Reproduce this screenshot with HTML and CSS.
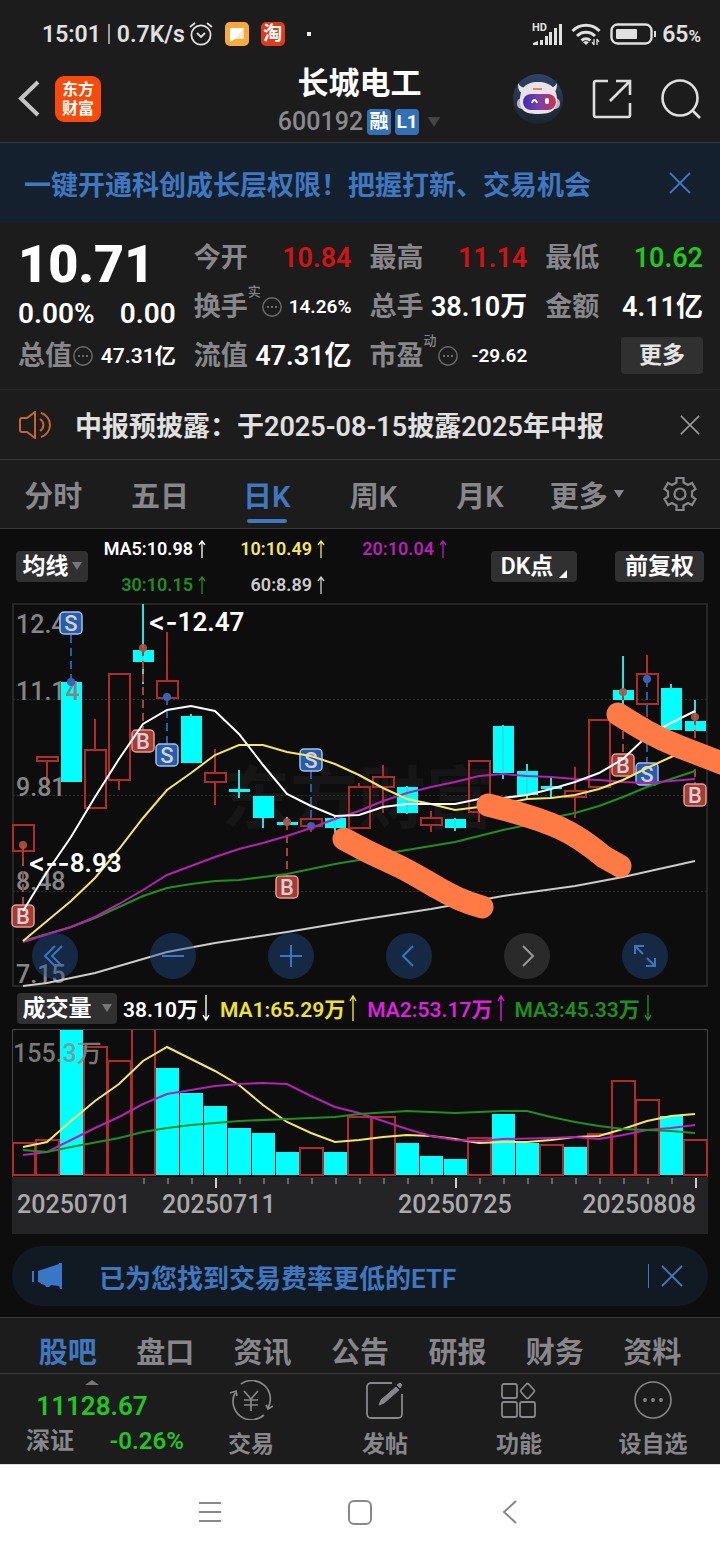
FILE: index.html
```
<!DOCTYPE html>
<html lang="zh-CN">
<head>
<meta charset="utf-8">
<meta name="viewport" content="width=device-width, initial-scale=1">
<title>长城电工 600192</title>
<link rel="stylesheet" href="styles.css">
</head>
<body>
<svg class="defs" aria-hidden="true">
  <symbol id="up" viewBox="0 0 8 18"><path d="M4 1v17M1 5l3-4 3 4" fill="none" stroke="currentColor" stroke-width="1.3"/></symbol>
  <symbol id="down" viewBox="0 0 8 26"><path d="M4 0v25M1 20l3 5 3-5" fill="none" stroke="currentColor" stroke-width="1.4"/></symbol>
  <symbol id="up-tall" viewBox="0 0 8 26"><path d="M4 26V1M1 6l3-5 3 5" fill="none" stroke="currentColor" stroke-width="1.4"/></symbol>
  <symbol id="more" viewBox="0 0 20 20"><circle cx="10" cy="10" r="9.2" fill="none" stroke="currentColor" stroke-width="1.4"/><path d="M5 9h2v2H5zM9 9h2v2H9zM13 9h2v2h-2z" fill="currentColor"/></symbol>
  <symbol id="close" viewBox="0 0 22 22"><path d="M1 1l20 20M21 1L1 21" fill="none" stroke="currentColor" stroke-width="1.8"/></symbol>
  <symbol id="tri" viewBox="0 0 10 8"><path d="M0 0h10L5 8z" fill="currentColor"/></symbol>
</svg>

<div class="status">
  <div class="status-side">
    <span>15:01</span><span class="status-rule"></span><span>0.7K/s</span>
    <svg class="alarm" viewBox="0 0 24 24" fill="none" stroke="currentColor" stroke-width="1.8"><circle cx="12" cy="13" r="9.6"/><path d="M8 11l4 4 4-4M1 5l5-4M23 5l-5-4"/></svg>
    <svg class="app-icon" viewBox="0 0 24 24"><rect width="24" height="24" rx="5" fill="#fba93c"/><path d="M5 6h14v11H10l-5 3z" fill="#fff"/><path d="M19 6v11h-9z" fill="#ffe9c9"/></svg>
    <span class="app-icon taobao">淘</span>
    <span class="status-dot"></span>
  </div>
  <div class="status-side">
    <svg class="signal" viewBox="0 0 30 24"><g fill="currentColor"><path d="M1 23v-2l5-2v4zM8 18h3v5H8zM13 14h3v9h-3zM17 10h3v13h-3zM22 6h3v17h-3zM27 2h3v21h-3z"/></g><text x="0" y="9" class="hd">HD</text></svg>
    <svg class="wifi" viewBox="0 0 30 24" fill="none" stroke="currentColor" stroke-width="3"><path d="M1.500 9a19 19 0 0 1 27 0M6 14a12.500 12.500 0 0 1 18 0M10.500 18.500a6.500 6.500 0 0 1 9 0"/><path d="M12 20l3-1 3 1-3 3z" fill="currentColor" stroke="none"/><path d="M23 17v6M26 17v6M21 20l2 3M28 20l-2-3" stroke-width="1.300"/></svg>
    <svg class="battery" viewBox="0 0 47 22"><rect x="1.500" y="1.500" width="40" height="19" rx="6" fill="none" stroke="currentColor" stroke-width="2.400"/><rect x="6" y="6" width="21" height="10" rx="1" fill="currentColor"/><path d="M44 8h2v6h-2z" fill="currentColor"/></svg>
    <span>65<small>%</small></span>
  </div>
</div>

<header class="header">
  <div class="header-left">
    <button class="plain" aria-label="返回"><svg class="back" viewBox="0 0 22 37"><path d="M20 2L3 18.500 20 35" fill="none" stroke="#c4c4c4" stroke-width="4"/></svg></button>
    <span class="logo">东方<br>财富</span>
  </div>
  <div class="header-mid">
    <h1>长城电工</h1>
    <div class="code"><span>600192</span><b class="badge">融</b><b class="badge">L1</b><svg class="code-tri"><use href="#tri"/></svg></div>
  </div>
  <div class="header-right">
    <button class="plain" aria-label="智能助手"><svg class="robot" viewBox="0 0 50 50"><defs><linearGradient id="sky" x2="0" y2="1"><stop stop-color="#2d4468"/><stop offset="1" stop-color="#1b2430"/></linearGradient><linearGradient id="visor"><stop stop-color="#3c2fb0"/><stop offset=".5" stop-color="#7c3fae"/><stop offset="1" stop-color="#d03248"/></linearGradient></defs><circle cx="25" cy="25" r="25" fill="url(#sky)"/><path d="M5 9c0 6 1 10 6 10l6-6c-6 2-10 0-12-4zM44 9c0 6-1 10-6 10l-6-6c6 2 10 0 12-4z" fill="#e9e4e6"/><rect x="4" y="24" width="43" height="11" rx="5" fill="#b9b5c0"/><path d="M25 8c14 0 19 8 19 18s-5 14-19 14S7 36 7 26 11 8 25 8z" fill="#e8e3e4"/><path d="M20 15h9" stroke="#d98a62" stroke-width="2"/><rect x="10" y="20" width="33" height="16" rx="8" fill="url(#visor)"/><path d="M19 29c1-4 4-4 5 0" fill="none" stroke="#fff" stroke-width="1.800"/><rect x="32" y="24" width="4" height="6" rx="2" fill="#fff"/></svg></button>
    <button class="plain" aria-label="分享"><svg class="share" viewBox="0 0 40 40" fill="none" stroke="#dedede" stroke-width="2.600"><path d="M16 2H4a2 2 0 0 0-2 2v32a2 2 0 0 0 2 2h32a2 2 0 0 0 2-2V24M24 2h14v14M38 2L18 22"/></svg></button>
    <button class="plain" aria-label="搜索"><svg class="search" viewBox="0 0 40 40" fill="none" stroke="#dedede" stroke-width="2.600"><circle cx="19" cy="19" r="17.500"/><path d="M31 31l8 8"/></svg></button>
  </div>
</header>

<section class="promo">
  <a href="#open">一键开通科创成长层权限！把握打新、交易机会</a>
  <button class="plain" aria-label="关闭"><svg class="x22"><use href="#close"/></svg></button>
</section>

<section class="quote">
  <div class="quote-main">
    <strong class="price">10.71</strong>
    <div class="change"><span>0.00%</span><span>0.00</span></div>
    <div class="cell"><span class="key">总值</span><svg class="more"><use href="#more"/></svg><span class="val s21">47.31亿</span></div>
  </div>
  <div class="quote-grid">
    <div class="cell"><span class="key">今开</span><span class="val red">10.84</span></div>
    <div class="cell"><span class="key">最高</span><span class="val red">11.14</span></div>
    <div class="cell"><span class="key">最低</span><span class="val green">10.62</span></div>
    <div class="cell"><span class="key">换手</span><sup>实</sup><svg class="more"><use href="#more"/></svg><span class="val s19">14.26%</span></div>
    <div class="cell"><span class="key">总手</span><span class="val">38.10万</span></div>
    <div class="cell"><span class="key">金额</span><span class="val">4.11亿</span></div>
    <div class="cell"><span class="key">流值</span><span class="val">47.31亿</span></div>
    <div class="cell"><span class="key">市盈</span><sup>动</sup><svg class="more"><use href="#more"/></svg><span class="val s19">-29.62</span></div>
    <div class="cell end"><button class="chip more-btn">更多</button></div>
  </div>
</section>

<section class="news">
  <svg class="speaker" viewBox="0 0 34 28" fill="none" stroke="#c8642f" stroke-width="2"><path d="M16 1v26L8 21H3a2 2 0 0 1-2-2V9a2 2 0 0 1 2-2h5zM21 8a7 7 0 0 1 0 12M22 2a12.500 12.500 0 0 1 0 24"/></svg>
  <a href="#news">中报预披露：于2025-08-15披露2025年中报</a>
  <button class="plain" aria-label="关闭"><svg class="x20" viewBox="0 0 22 22"><use href="#close"/></svg></button>
</section>

<nav class="periods">
  <button class="tab">分时</button>
  <button class="tab">五日</button>
  <button class="tab active">日K</button>
  <button class="tab">周K</button>
  <button class="tab">月K</button>
  <button class="tab">更多<svg class="tri"><use href="#tri"/></svg></button>
  <button class="gear" aria-label="设置"><svg viewBox="0 0 34 34" fill="none" stroke="currentColor" stroke-width="2.200"><path d="M13.500 1h7v4.500l4.500 2.500 4-2 3.500 6-3.500 2.500v5l3.500 2.500-3.500 6-4-2-4.500 2.500V33h-7v-4.500L9 26l-4 2-3.500-6L5 19.500v-5L1.500 12 5 6l4 2 4.500-2.500z"/><circle cx="17" cy="17" r="5.500"/></svg></button>
</nav>

<main class="charts">
  <div class="ma-row">
    <button class="chip">均线<svg class="tri"><use href="#tri"/></svg></button>
    <div class="ma-legend">
      <span class="w">MA5:10.98<svg class="ar"><use href="#up"/></svg></span>
      <span class="y">10:10.49<svg class="ar"><use href="#up"/></svg></span>
      <span class="m">20:10.04<svg class="ar"><use href="#up"/></svg></span>
      <span class="g">30:10.15<svg class="ar"><use href="#up"/></svg></span>
      <span class="l">60:8.89<svg class="ar"><use href="#up"/></svg></span>
    </div>
    <button class="chip dk">DK点<svg class="corner" viewBox="0 0 8 8"><path d="M8 0v8H0z" fill="#fff"/></svg></button>
    <button class="chip fq">前复权</button>
  </div>

  <div class="kline">
    <svg class="plot" viewBox="12 603 696 384" role="img" aria-label="日K线">
      <rect x="13" y="604" width="694" height="382" class="frame"/>
      <text x="222" y="823" class="watermark">东方财富</text>
      <path d="M13 699.500h694M13 795.500h694M13 891.500h694" class="grid"/>
      <g class="axis">
        <text x="16" y="633">12.47</text>
      </g>
      <path class="up" d="M13 825h21v26H13zM23 851v8M37 757h21v4H37zM47 761v28M85 750h21v58H85zM95 719v31M109 674h21v106h-21zM119 780v10M157 681h21v17h-21zM167 632v49M205 773h21v9h-21zM215 749v24M215 782v23M301 819h21v7h-21zM311 826v6M349 787h21v41h-21zM359 783v4M373 777h21v10h-21zM383 765v12M383 787v26M421 818h21v7h-21zM431 811v7M431 825v7M469 761h21v51h-21zM479 812v10M565 791h21v6h-21zM575 767v24M575 797v21M589 720h21v67h-21zM637 674h21v30h-21zM647 655v19M647 704v13"/>
      <path class="down" d="M61 682h21v100H61zM133 650h21v12h-21zM181 716h21v47h-21zM229 789h21v3h-21zM253 796h21v22h-21zM277 822h21v3h-21zM325 818h21v10h-21zM397 787h21v26h-21zM445 819h21v9h-21zM493 726h21v47h-21zM517 771h21v24h-21zM541 786h21v3h-21zM613 690h21v10h-21zM661 688h21v42h-21zM685 721h21v10h-21z"/>
      <path class="down-wick" d="M143 604v80M191 714v4M239 770v28M263 818v10M287 817v12M335 815v20M407 786v28M455 818v13M503 725v54M527 764v36M551 778v20M623 656v50M671 684v5M695 700v36"/>
      <g class="axis">
        <text x="16" y="700">11.14</text>
        <text x="16" y="796">9.81</text>
        <text x="16" y="890">8.48</text>
        <text x="16" y="983">7.15</text>
      </g>
      <g class="dash">
        <path class="sell" d="M71 635v47M167 697v47M311 771v55M647 679v84"/>
        <path class="buy" d="M143 648v82M23 845v60M287 822v54M623 692v62M695 717v67"/>
      </g>
      <g class="buy-dot"><circle cx="143" cy="648" r="4"/><circle cx="23" cy="845" r="4"/><circle cx="287" cy="822" r="4"/><circle cx="623" cy="692" r="4"/><circle cx="695" cy="717" r="4"/></g>
      <g class="sell-dot"><circle cx="71" cy="682" r="4"/><circle cx="167" cy="697" r="4"/><circle cx="311" cy="826" r="4"/><circle cx="647" cy="679" r="4"/></g>
      <g class="mark sell-mark">
        <rect x="60" y="612" width="22" height="22" rx="4"/><text x="71" y="631">S</text>
        <rect x="156" y="744" width="22" height="22" rx="4"/><text x="167" y="763">S</text>
        <rect x="300" y="749" width="22" height="22" rx="4"/><text x="311" y="768">S</text>
        <rect x="636" y="763" width="22" height="22" rx="4"/><text x="647" y="782">S</text>
      </g>
      <g class="mark buy-mark">
        <rect x="132" y="730" width="22" height="22" rx="4"/><text x="143" y="749">B</text>
        <rect x="12" y="905" width="22" height="22" rx="4"/><text x="23" y="924">B</text>
        <rect x="276" y="876" width="22" height="22" rx="4"/><text x="287" y="895">B</text>
        <rect x="612" y="754" width="22" height="22" rx="4"/><text x="623" y="773">B</text>
        <rect x="684" y="784" width="22" height="22" rx="4"/><text x="695" y="803">B</text>
      </g>
      <g class="lines">
        <polyline class="l" points="23,986 47,983 95,973 167,952 215,943 287,932 359,920 431,909 503,896 575,886 623,877 695,861"/>
        <polyline class="g" points="23,941 71,927 95,918 119,907 143,896 167,888 191,884 215,881 239,880 263,877 287,874 311,869 335,864 359,860 383,854 407,850 455,842 503,830 527,825 551,818 575,813 599,806 623,797 647,787 671,779 695,771"/>
        <polyline class="m" points="23,942 71,927 95,917 119,904 143,890 167,875 191,866 215,857 239,849 263,843 287,836 311,828 335,819 359,811 383,801 407,793 431,787 455,782 479,776 503,774 527,776 551,777 575,779 599,780 623,782 647,783 671,781 695,779"/>
        <polyline class="y" points="23,941 47,921 71,901 95,878 119,849 143,818 167,790 191,773 215,755 239,745 263,745 287,752 311,756 335,764 359,775 383,788 407,799 431,804 455,810 479,807 503,804 527,799 551,798 575,795 599,789 623,780 647,768 671,757 695,745"/>
        <polyline class="w" points="23,911 47,872 71,837 95,797 119,759 143,724 167,710 191,706 215,711 239,734 263,765 287,794 311,806 335,816 359,815 383,807 407,804 431,804 455,804 479,799 503,798 527,795 551,789 575,782 599,773 623,759 647,736 671,723 695,711"/>
      </g>
      <g class="extreme">
        <text x="148" y="631"><tspan class="arrow">&lt;-</tspan>12.47</text>
        <text x="28" y="872"><tspan class="arrow">&lt;--</tspan>8.93</text>
      </g>
      <path class="brush" d="M344 839C360 848 376 856 392 863C410 871 422 879 438 888C454 897 464 902 482 907M488 805C512 811 538 818 560 828C578 836 592 847 604 857L620 866M618 714C640 728 655 737 680 747L740 770"/>
    </svg>
    <div class="controls">
      <button class="round" aria-label="最早"><svg viewBox="0 0 24 24"><path d="M12 2L2 12l10 10M19 2L9 12l10 10"/></svg></button>
      <button class="round" aria-label="缩小"><svg viewBox="0 0 24 24"><path d="M1 12h22"/></svg></button>
      <button class="round" aria-label="放大"><svg viewBox="0 0 24 24"><path d="M1 12h22M12 1v22"/></svg></button>
      <button class="round" aria-label="前移"><svg viewBox="0 0 24 24"><path d="M16 2L6 12l10 10"/></svg></button>
      <button class="round off" aria-label="后移"><svg viewBox="0 0 24 24"><path d="M8 2l10 10L8 22"/></svg></button>
      <button class="round" aria-label="全屏"><svg viewBox="0 0 24 24"><path d="M2 10V2h9M2 2l8 8M22 14v8h-9M22 22l-8-8"/></svg></button>
    </div>
  </div>

  <div class="vol-row">
    <button class="chip">成交量<svg class="tri"><use href="#tri"/></svg></button>
    <span class="w">38.10万<svg class="tall"><use href="#down"/></svg></span>
    <span class="y">MA1:65.29万<svg class="tall"><use href="#up-tall"/></svg></span>
    <span class="m">MA2:53.17万<svg class="tall"><use href="#up-tall"/></svg></span>
    <span class="g">MA3:45.33万<svg class="tall"><use href="#down"/></svg></span>
  </div>

  <div class="volume">
    <svg class="plot" viewBox="12 1029 696 205" role="img" aria-label="成交量">
      <path class="vol-frame" d="M12.500 1177V1029.500h695V1177"/>
      <path class="up" d="M13 1143h22v32H13zM36 1140h23v35H36zM84 1047h23v128H84zM108 1061h23v114h-23zM132 1030v145h23V1030M300 1148h23v27h-23zM348 1117h23v58h-23zM372 1117h23v58h-23zM468 1138h23v37h-23zM540 1145h23v30h-23zM588 1134h23v41h-23zM612 1081h23v94h-23zM636 1100h23v75h-23zM684 1140h23v35h-23z"/>
      <path class="down" d="M60 1030h23v145H60zM156 1068h23v107h-23zM180 1093h23v82h-23zM204 1106h23v69h-23zM228 1128h23v47h-23zM252 1133h23v42h-23zM276 1152h23v23h-23zM324 1152h23v23h-23zM396 1143h23v32h-23zM420 1156h23v19h-23zM444 1159h23v16h-23zM492 1114h23v61h-23zM516 1143h23v32h-23zM564 1147h23v28h-23zM660 1116h23v59h-23z"/>
      <text x="13" y="1062" class="vol-max">155.3万</text>
      <g class="lines">
        <polyline class="y" points="23,1147 47,1142 71,1121 95,1101 119,1084 143,1061 167,1047 191,1059 215,1071 239,1085 263,1105 287,1122 311,1133 335,1142 359,1140 383,1137 407,1135 431,1136 455,1139 479,1143 503,1142 527,1142 551,1140 575,1137 599,1136 623,1129 647,1121 671,1116 695,1114"/>
        <polyline class="m" points="23,1155 47,1152 71,1140 95,1128 119,1117 143,1104 167,1094 191,1090 215,1086 239,1084 263,1083 287,1084 311,1096 335,1107 359,1113 383,1121 407,1129 431,1136 455,1140 479,1141 503,1139 551,1138 575,1137 599,1139 623,1135 647,1130 671,1128 695,1125"/>
        <polyline class="g" points="23,1150 47,1152 71,1147 119,1138 143,1132 167,1128 191,1125 239,1121 287,1119 335,1117 359,1114 407,1111 455,1113 503,1111 527,1111 551,1117 575,1122 599,1126 623,1129 671,1131 695,1133"/>
      </g>
      <rect x="12" y="1177" width="696" height="57" fill="#242426"/>
      <path class="tick" d="M144 1178v6M168 1178v6M192 1178v6M240 1178v6M264 1178v6M288 1178v6M312 1178v6M336 1178v6M360 1178v6M384 1178v6M408 1178v6M432 1178v6M480 1178v6M504 1178v6M528 1178v6M552 1178v6M576 1178v6M600 1178v6M624 1178v6M648 1178v6M672 1178v6"/>
      <path class="tick major" d="M216 1178v10M456 1178v10M696 1178v10"/>
      <g class="dates">
        <text x="17" y="1213">20250701</text>
        <text x="162" y="1213">20250711</text>
        <text x="398" y="1213">20250725</text>
        <text x="696" y="1213" text-anchor="end">20250808</text>
      </g>
    </svg>
  </div>

  <section class="etf">
    <svg class="horn" viewBox="0 0 32 28"><path d="M31 1v26h-2l-1-3-8-1-2 2h-3l-1-2-4-1v-1l-3-1V9l21-7V1zM1 9h2v11H1z" fill="#3876c6"/></svg>
    <a href="#etf">已为您找到交易费率更低的ETF</a>
    <span class="etf-rule"></span>
    <button class="plain" aria-label="关闭"><svg class="x22"><use href="#close"/></svg></button>
  </section>
</main>

<nav class="sections">
  <button class="active">股吧</button><button>盘口</button><button>资讯</button><button>公告</button><button>研报</button><button>财务</button><button>资料</button>
</nav>

<footer class="toolbar">
  <div class="index">
    <svg class="index-tri" viewBox="0 0 14 5"><path d="M0 5h14L7 0z" fill="#777"/></svg>
    <span class="index-value">11128.67</span>
    <div class="index-sub"><span>深证</span><span class="green">-0.26%</span></div>
  </div>
  <button class="tool"><svg viewBox="0 0 44 40" fill="none" stroke="currentColor" stroke-width="1.700"><path d="M12 4a18.500 18.500 0 0 1 27 24M35 35A18.500 18.500 0 0 1 6 13M1 13l6-2 1 5M44 26l-5 3-2-4"/><path d="M15 11l7 8 7-8M22 19v12M15 20h14M15 25h14"/></svg>交易</button>
  <button class="tool"><svg viewBox="0 0 44 40" fill="none" stroke="currentColor" stroke-width="1.800"><path d="M29 3H8a4 4 0 0 0-4 4v27a4 4 0 0 0 4 4h27a4 4 0 0 0 4-4V14"/><path d="M16 25l2-5L33 7l3 3-15 13zM34 5l3-2 2 2-2 3z" fill="currentColor" stroke-width="1"/></svg>发帖</button>
  <button class="tool"><svg viewBox="0 0 44 40" fill="none" stroke="currentColor" stroke-width="1.800"><rect x="5" y="4" width="15" height="14" rx="2"/><rect x="5" y="22" width="15" height="15" rx="2"/><rect x="23" y="22" width="15" height="15" rx="2"/><path d="M29.500 4l-5.500 6a1.500 1.500 0 0 0 0 2l5.500 6a1.500 1.500 0 0 0 2 0l5.500-6a1.500 1.500 0 0 0 0-2l-5.500-6a1.500 1.500 0 0 0-2 0z"/></svg>功能</button>
  <button class="tool"><svg viewBox="0 0 44 40"><circle cx="22" cy="20" r="18" fill="none" stroke="currentColor" stroke-width="1.600"/><g fill="currentColor"><circle cx="14" cy="20" r="1.900"/><circle cx="22" cy="20" r="1.900"/><circle cx="30" cy="20" r="1.900"/></g></svg>设自选</button>
</footer>

<nav class="system" aria-label="系统导航">
  <button aria-label="菜单"><svg viewBox="0 0 26 26"><path d="M2 3h22M2 12h22M2 21h22"/></svg></button>
  <button aria-label="主页"><svg viewBox="0 0 26 26"><rect x="2" y="1" width="22" height="23" rx="5"/></svg></button>
  <button aria-label="返回"><svg viewBox="0 0 26 26"><path d="M19 1L7 12l12 11"/></svg></button>
</nav>
</body>
</html>
```
FILE: styles.css
```
* { box-sizing: border-box; }

body {
  margin: 0;
  background: #fff;
  color: #fff;
  font-family: Roboto, "Noto Sans CJK SC", sans-serif;
  font-weight: 600;
  overflow-x: hidden;
}

button {
  margin: 0;
  padding: 0;
  border: 0;
  background: none;
  color: inherit;
  font: inherit;
}

a { color: inherit; text-decoration: none; }
svg { flex: none; }
.defs { position: absolute; width: 0; height: 0; }
.plain { display: flex; }
.x22 { width: 22px; height: 22px; }
.x20 { width: 20px; height: 20px; }

.w { color: #fff; }
.y { color: #f5e663; }
.m { color: #b322b3; }
.g { color: #1f8f1f; }
.l { color: #ccc; }
.red { color: #d01414; }
.green { color: #1fc71f; }

/* status bar */
.status {
  display: flex;
  justify-content: space-between;
  align-items: center;
  height: 62px;
  padding: 6px 19px 0 42px;
  background: #1c1c1c;
  color: #e0e0e0;
  font-size: 23px;
}
.status-side { display: flex; align-items: center; }
.status-side small { font-size: 17px; }
.status-rule { width: 2px; height: 20px; margin: 0 7px; background: #999; }
.alarm { width: 24px; height: 24px; margin-left: 4px; }
.app-icon { width: 24px; height: 24px; margin-left: 12px; }
.taobao {
  border-radius: 5px;
  background: #dd3d1c;
  color: #fff;
  font-size: 19px;
  line-height: 24px;
  text-align: center;
}
.status-dot { width: 4px; height: 4px; margin-left: 22px; background: #eee; }
.signal { width: 30px; height: 24px; }
.hd { fill: #e0e0e0; font-size: 11px; font-weight: 700; }
.wifi { width: 30px; height: 24px; margin: 0 9px; }
.battery { width: 47px; height: 22px; margin-right: 5px; }

/* title bar */
.header {
  display: grid;
  grid-template-columns: 1fr auto 1fr;
  align-items: center;
  padding: 0 19px 7px 18px;
  border-bottom: 1px solid #3a3a3a;
  background: #1c1c1c;
}
.header-left { display: flex; align-items: center; gap: 15px; }
.back { width: 22px; height: 37px; }
.logo {
  padding: 4px 0;
  width: 46px;
  border-radius: 9px;
  background: #f84a08;
  font-size: 16px;
  font-weight: 700;
  line-height: 19px;
  text-align: center;
}
.header-mid { display: flex; flex-direction: column; align-items: center; gap: 6px; padding-top: 3px; }
h1 { margin: 0; font-size: 31px; font-weight: 700; line-height: 38px; }
.code { display: flex; align-items: center; gap: 4px; color: #8a8a8e; font-size: 25px; font-weight: 500; line-height: 26px; }
.badge { width: 24px; border-radius: 4px; background: #3470b8; color: #fff; font-size: 19px; text-align: center; }
.code-tri { width: 14px; height: 10px; margin-left: 4px; color: #444; }
.header-right { display: flex; align-items: center; justify-content: flex-end; gap: 29px; }
.robot { width: 50px; height: 50px; }
.share, .search { width: 40px; height: 40px; }

.promo {
  display: flex;
  justify-content: space-between;
  align-items: center;
  height: 80px;
  padding: 0 29px 0 24px;
  background: #14202e;
  color: #3d78c0;
  font-size: 27px;
}

/* quote */
.quote {
  display: grid;
  grid-template-columns: repeat(4, 1fr);
  column-gap: 18px;
  padding: 10px 17px 9px 18px;
  border-bottom: 1px solid #2c2c2c;
  background: #1c1c1c;
}
.quote-main { display: flex; flex-direction: column; }
.quote-grid {
  display: grid;
  grid-column: span 3;
  grid-template-columns: repeat(3, 1fr);
  column-gap: 18px;
}
.price { font-size: 52px; line-height: 64px; }
.change { display: flex; justify-content: space-between; font-size: 28px; line-height: 34px; }
.cell { display: flex; align-items: center; height: 49px; line-height: 36px; white-space: nowrap; }
.key { color: #87878b; font-size: 27px; }
.cell sup { align-self: flex-start; color: #87878b; font-size: 13px; font-weight: 500; line-height: 20px; }
.more { width: 20px; height: 20px; color: #6c6c6c; margin-left: 1px; }
.val { margin-left: auto; font-size: 27px; }
.val.s21 { font-size: 21px; }
.val.s19 { font-size: 19px; }
.end { justify-content: flex-end; }

.chip {
  display: flex;
  align-items: center;
  justify-content: center;
  height: 31px;
  border-radius: 4px;
  background: #303030;
  color: #fff;
  font-size: 23px;
  line-height: 31px;
  white-space: nowrap;
}
.more-btn { width: 82px; height: 37px; color: #e4e4e4; }

.news {
  display: flex;
  align-items: center;
  height: 70px;
  padding: 0 20px 0 19px;
  border-bottom: 1px solid #3a3a3a;
  background: #1c1c1c;
  color: #e0e0e0;
  font-size: 27px;
}
.speaker { width: 34px; height: 28px; }
.news a { flex: 1; margin-left: 22px; white-space: nowrap; }
.news .plain { color: #999; }

/* period tabs */
.periods {
  display: flex;
  height: 69px;
  border-bottom: 1px solid #3a3a3a;
  background: #1c1c1c;
  color: #87878b;
  font-size: 29px;
}
.tab {
  position: relative;
  display: flex;
  flex: 1;
  align-items: center;
  justify-content: center;
  gap: 6px;
}
.active { color: #3d78c0; }
.tab.active::after {
  content: "";
  position: absolute;
  bottom: 5px;
  width: 40px;
  height: 4px;
  border-radius: 2px;
  background: #3d78c0;
}
.tri { width: 10px; height: 8px; }
.gear { display: flex; align-items: center; justify-content: center; width: 80px; }
.gear svg { width: 34px; height: 34px; }

/* charts */
.charts { padding-bottom: 11px; background: #0d0d0d; }
.ma-row { display: flex; align-items: center; height: 74px; padding: 0 16px; }
.chip .tri { margin-left: 3px; color: #777; }
.ma-row > .chip:first-child { width: 72px; }
.ma-legend {
  display: grid;
  grid-template-columns: 118px 119px 122px;
  flex: 1;
  padding-top: 2px;
  font-size: 18px;
  line-height: 36px;
}
.ma-legend span { display: flex; justify-content: flex-end; align-items: center; gap: 5px; }
.ar { width: 8px; height: 18px; }
.dk { width: 86px; margin-right: 38px; }
.corner { align-self: flex-end; width: 8px; height: 8px; margin: 0 0 4px 6px; }
.fq { width: 89px; }

.kline, .volume { position: relative; margin: 0 12px; font-weight: 500; }
.plot { display: block; width: 100%; overflow: visible; }
.frame { fill: none; stroke: #262626; stroke-width: 2; }
.watermark { fill: #161616; font-size: 68px; font-weight: 700; }
.grid { stroke: #2c2c2c; stroke-dasharray: 2 2; }
.axis text { fill: #858585; font-size: 25px; }
.up { fill: none; stroke: #b02c2a; stroke-width: 2; }
.down { fill: #00ffff; }
.down-wick { stroke: #35dcdc; stroke-width: 2; }
.dash { stroke-width: 2; stroke-dasharray: 8 5; }
.sell { stroke: #2a5ba6; }
.buy { stroke: #a8432f; }
.buy-dot { fill: #b5533f; fill-opacity: .9; }
.sell-dot { fill: #3465b8; }
.mark text { font-size: 22px; text-anchor: middle; fill: #d6d0da; }
.mark rect { stroke-width: 1.5; }
.sell-mark rect { fill: #245cb0; stroke: #a9bfe4; }
.buy-mark rect { fill: #aa3a2e; stroke: #dd9d94; }
.lines { fill: none; stroke-width: 2; }
.lines polyline { stroke: currentColor; }
.extreme text { fill: #fff; font-size: 26px; font-weight: 600; }
.arrow { font-family: Inter, sans-serif; font-feature-settings: "calt" 0; }
.brush { fill: none; stroke: #ff7a45; stroke-width: 23; stroke-linecap: round; stroke-linejoin: round; }

.controls {
  position: absolute;
  right: 40px;
  bottom: 8px;
  left: 20px;
  display: flex;
  justify-content: space-between;
}
.round {
  display: flex;
  align-items: center;
  justify-content: center;
  width: 46px;
  height: 46px;
  border-radius: 50%;
  background: rgba(35, 80, 145, .42);
}
.round svg { width: 24px; height: 24px; fill: none; stroke: #3876c0; stroke-width: 2; }
.round.off { background: #2a2a2a; }
.round.off svg { stroke: #999; }

.vol-row {
  display: flex;
  align-items: center;
  gap: 10px;
  height: 42px;
  padding: 0 17px;
  font-size: 21px;
}
.vol-row .chip { width: 100px; margin-right: -4px; }
.vol-row .chip .tri { margin-left: 10px; }
.vol-row span { display: flex; align-items: center; gap: 4px; white-space: nowrap; }
.vol-row .y { color: #f0e22c; }
.vol-row .m { color: #dd20dd; }
.tall { width: 8px; height: 26px; }
.vol-frame { fill: none; stroke: #444; }
.vol-max { fill: #8c8c8c; fill-opacity: .85; font-size: 25px; }
.tick { stroke: #666; stroke-width: 2; }
.tick.major { stroke: #ccc; }
.dates { fill: #aaa; font-size: 25px; }

.etf {
  display: flex;
  align-items: center;
  height: 60px;
  margin: 12px 12px 0;
  padding: 0 25px 0 19px;
  border-radius: 30px;
  background: #111a22;
  color: #3d78c0;
  font-size: 26px;
}
.horn { width: 32px; height: 28px; }
.etf a { flex: 1; margin-left: 36px; }
.etf-rule { width: 1px; height: 24px; margin-right: 12px; background: #3d78c0; }

.sections {
  display: flex;
  height: 57px;
  padding: 15px 19px 0;
  border-top: 1px solid #3a3a3a;
  border-bottom: 1px solid #3a3a3a;
  background: #1c1c1c;
  color: #87878b;
  font-size: 29px;
}
.sections button { flex: 1; line-height: 40px; }
.sections .active { color: #3d78c0; }

/* bottom toolbar */
.toolbar { display: flex; height: 90px; background: #1c1c1c; color: #87878b; }
.index { display: flex; flex-direction: column; align-items: center; width: 184px; padding: 6px 0 0 26px; }
.index-tri { width: 14px; height: 5px; margin-right: 26px; }
.index-value { margin-right: 26px; color: #1fc71f; font-size: 26px; line-height: 42px; }
.index-sub { display: flex; justify-content: space-between; width: 100%; font-size: 24px; line-height: 28px; }
.tool { display: flex; flex: 1; flex-direction: column; align-items: center; font-size: 23px; line-height: 30px; padding-top: 6px; gap: 10px; }
.tool svg { width: 44px; height: 40px; }

/* system navigation */
.system {
  display: flex;
  justify-content: center;
  align-items: center;
  gap: 124px;
  height: 96px;
  border-top: 1px solid #ddd;
  background: #fff;
}
.system button { display: flex; }
.system svg { width: 26px; height: 26px; fill: none; stroke: #888; stroke-width: 2; }
```
